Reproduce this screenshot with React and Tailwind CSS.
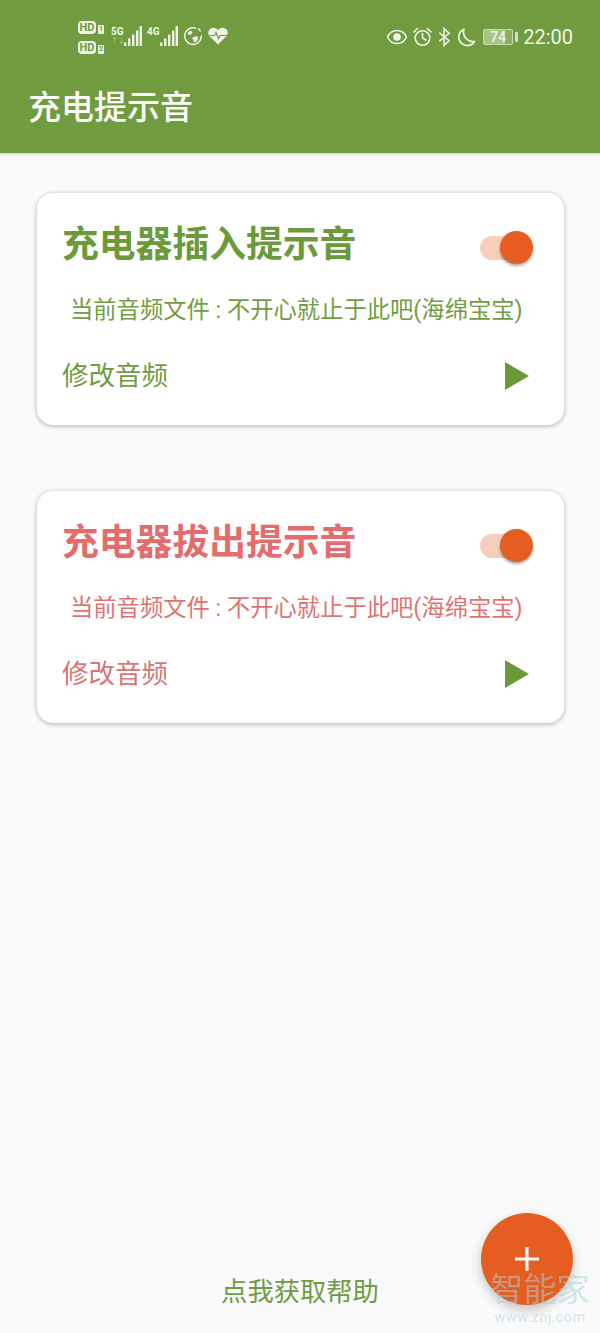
import React from 'react';

const FONT = 'font-["Roboto","Noto_Sans_CJK_SC",sans-serif]';

const HdBadge = ({ n }) => (
  <div className="flex items-end gap-[2px]">
    <span className="h-[13px] w-[18px] rounded-[4px] bg-[#eef3e6] text-center text-[11px] font-bold leading-[13px] text-[#709c3f]">HD</span>
    <span className="h-[9px] w-[6px] rounded-[1px] bg-[#eef3e6] text-center text-[7px] font-bold leading-[9px] text-[#709c3f]">{n}</span>
  </div>
);

const Signal = ({ label, extra }) => (
  <div className="relative h-[20px] w-[31px]">
    <span className="absolute left-0 top-0 text-[10px] font-bold leading-[11px] text-[#eef3e6]">{label}</span>
    {extra && <span className="absolute left-0 top-[11px] text-[7px] leading-[9px] text-[#b9d09d]">{extra}</span>}
    <svg className="absolute bottom-0 right-0" width="18" height="20" viewBox="0 0 18 20" fill="#eef3e6">
      <rect x="0" y="16.500" width="2.400" height="3.500" />
      <rect x="4" y="12.500" width="2.400" height="7.500" />
      <rect x="8" y="8.500" width="2.400" height="11.500" />
      <rect x="12" y="4.500" width="2.400" height="15.500" />
      <rect x="15.600" y="0" width="2.400" height="20" />
    </svg>
  </div>
);

const GlobeIcon = () => (
  <svg width="20" height="20" viewBox="0 0 20 20" fill="none" stroke="#eef3e6" strokeWidth="1.500" strokeLinecap="round">
    <path d="M12.500 2.200A8.300 8.300 0 1 0 18.300 10" />
    <path d="M15.500 2.800a8.300 8.300 0 0 1 1.700 2" />
    <path d="M5 6l3-1.500 1.500 2-2 2.500-2.500-.5z" fill="#eef3e6" stroke="none" />
    <path d="M9 12l4-2 2.500 1.500-2 4-2.500 1-.5-2.500z" fill="#eef3e6" stroke="none" />
  </svg>
);

const HeartIcon = () => (
  <svg width="20" height="18" viewBox="0 0 20 18">
    <path d="M10 17.500 1.600 9.200C-.8 6.600.2 1.400 4.800.8 7 .5 8.800 1.500 10 3.200 11.200 1.500 13 .5 15.200.8c4.600.6 5.600 5.800 3.200 8.400z" fill="#eef3e6" />
    <path d="M1.500 8.500h5l1.500-3 2.500 6 1.500-3h7" fill="none" stroke="#709c3f" strokeWidth="1.200" />
  </svg>
);

const EyeIcon = () => (
  <svg width="20" height="16" viewBox="0 0 20 16">
    <path d="M10 1.500C5.500 1.500 2 4.500.6 8 2 11.500 5.500 14.500 10 14.500s8-3 9.400-6.500C18 4.500 14.500 1.500 10 1.500z" fill="none" stroke="#eef3e6" strokeWidth="1.500" />
    <circle cx="10" cy="8" r="3.800" fill="#eef3e6" />
  </svg>
);

const AlarmIcon = () => (
  <svg width="19" height="20" viewBox="0 0 19 20" fill="none" stroke="#eef3e6" strokeWidth="1.600" strokeLinecap="round">
    <circle cx="9.500" cy="11" r="7.300" />
    <path d="M9.500 6.500V11l3.500 2" />
    <path d="M1 5 4.500 1.500M18 5l-3.500-3.500" />
  </svg>
);

const BluetoothIcon = () => (
  <svg width="13" height="20" viewBox="0 0 14 20" fill="none" stroke="#eef3e6" strokeWidth="1.700">
    <path d="M1.500 5.500 12 14l-5.500 5V1L12 6 1.500 14.500" />
  </svg>
);

const MoonIcon = () => (
  <svg width="19" height="19" viewBox="0 0 18 19" fill="none" stroke="#eef3e6" strokeWidth="1.700" strokeLinejoin="round">
    <path d="M6.500 1.200A8.500 8.500 0 1 0 17 13.500 9.500 9.500 0 0 1 6.500 1.200z" />
  </svg>
);

const Battery = () => (
  <div className="flex items-center gap-[2px]">
    <div className="h-[16px] w-[30px] overflow-hidden rounded-[2px] border border-[#c5d8ae] bg-[#8cb061]">
      <div className="h-full w-[74%] bg-[#a8c487] text-[14px] font-medium leading-[14px] whitespace-nowrap text-[#eef3e6]">
        <span className="pl-[6px]">74</span>
      </div>
    </div>
    <div className="h-[10px] w-[3px] rounded-[1px] bg-[#d5e2c5]" />
  </div>
);

const Toggle = () => (
  <div className="relative h-[24px] w-[53px]">
    <div className="h-full w-[40px] rounded-full bg-[#f7cdbc]" />
    <div className="absolute right-0 top-[-5px] h-[33px] w-[33px] rounded-full bg-[#e55d20] shadow-[0_2px_3px_rgba(0,0,0,0.35)]" />
  </div>
);

const SoundCard = ({ title, titleColor, fileColor, actionColor }) => (
  <div className="h-[232px] rounded-[16px] bg-white pl-[25px] pr-[31px] shadow-[0_1px_5px_rgba(0,0,0,0.3)]">
    <div className="flex h-[102px] items-center justify-between pt-[1px]">
      <h2 className={`text-[36.800px] font-bold leading-[50px] ${titleColor}`}>{title}</h2>
      <div className="mt-[7px]"><Toggle /></div>
    </div>
    <p className={`h-[30px] pl-[8px] text-[23.300px] leading-[30px] whitespace-nowrap ${fileColor}`}>
      当前音频文件 : 不开心就止于此吧(海绵宝宝)
    </p>
    <div className="mt-[26px] flex items-center justify-between">
      <span className={`text-[26.500px] leading-[50px] ${actionColor}`}>修改音频</span>
      <svg className="mr-[4px]" width="24" height="28" viewBox="0 0 24 28">
        <path d="M0 0 24 14 0 28z" fill="#6a9a38" />
      </svg>
    </div>
  </div>
);

export default function App() {
  return (
    <div className={`relative flex h-[1333px] w-[600px] flex-col overflow-hidden bg-[#fafafa] ${FONT}`}>
      <header className="h-[153px] bg-[#709c3f] shadow-[0_1px_3px_rgba(0,0,0,0.2)]">
        <div className="flex h-[66px] items-start justify-between pl-[78px] pr-[27px] pt-[19px]">
          <div className="flex items-center gap-[3px] pt-[2px]">
            <div className="flex flex-col gap-[7px]">
              <HdBadge n="1" />
              <HdBadge n="2" />
            </div>
            <div className="ml-[4px] flex -translate-y-[2px] items-center gap-[5px]">
              <Signal label="5G" extra="↑↓" />
              <Signal label="4G" />
              <GlobeIcon />
              <HeartIcon />
            </div>
          </div>
          <div className="flex h-[36px] items-center">
            <EyeIcon />
            <div className="ml-[6px]"><AlarmIcon /></div>
            <div className="ml-[6px]"><BluetoothIcon /></div>
            <div className="ml-[6px]"><MoonIcon /></div>
            <div className="ml-[7px]"><Battery /></div>
            <span className="ml-[5px] text-[20px] leading-[36px] text-[#eef3e6]">22:00</span>
          </div>
        </div>
        <h1 className="pl-[28px] pt-[3px] text-[33px] font-medium leading-[78px] text-[#fbfcf8]">充电提示音</h1>
      </header>

      <main className="flex flex-1 flex-col gap-[66px] pl-[37px] pr-[36px] pt-[40px]">
        <SoundCard title="充电器插入提示音" titleColor="text-[#6a9a39]" fileColor="text-[#719c44]" actionColor="text-[#6f9b42]" />
        <SoundCard title="充电器拔出提示音" titleColor="text-[#e56c6c]" fileColor="text-[#df7373]" actionColor="text-[#d97474]" />
      </main>

      <footer className="pb-[21px] text-center text-[26.300px] leading-[40px] text-[#6f9b42]">点我获取帮助</footer>

      <button className="absolute left-[481px] top-[1213px] flex h-[92px] w-[92px] items-center justify-center rounded-full bg-[#e55d20] shadow-[0_5px_12px_rgba(0,0,0,0.22)]">
        <svg width="24" height="24" viewBox="0 0 24 24">
          <path d="M10.500 0h3v24h-3zM0 10.500h24v3H0z" fill="#fff" />
        </svg>
      </button>

      <div className="pointer-events-none absolute left-[490px] top-[1270px] w-[100px] text-center text-[#a9d0dc]/50">
        <div className="text-[33px] leading-[40px] whitespace-nowrap">智能家</div>
        <div className="text-[14.500px] leading-[16px] tracking-[0.400px] whitespace-nowrap">www.znj.com</div>
      </div>
    </div>
  );
}
